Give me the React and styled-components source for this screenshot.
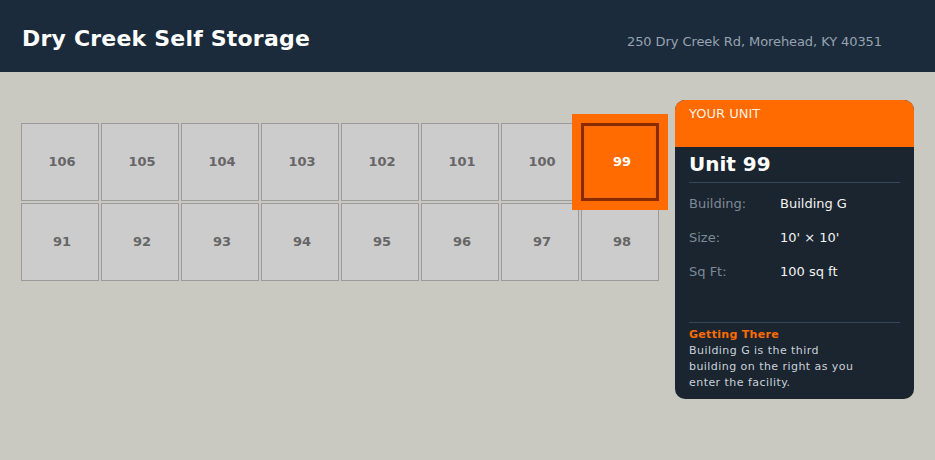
import React from "react";
import styled, { createGlobalStyle } from "styled-components";

const Global = createGlobalStyle`
  html, body { margin: 0; padding: 0; }
  body {
    background: #c9c9c1;
    font-family: "DejaVu Sans", Verdana, sans-serif;
    width: 935px;
    height: 460px;
    overflow: hidden;
  }
`;

const Header = styled.header`
  height: 72px;
  box-sizing: border-box;
  padding: 4px 53px 0 22px;
  background: #1b2b3c;
  display: flex;
  align-items: center;
  justify-content: space-between;
`;

const Title = styled.h1`
  margin: 0;
  font-size: 22px;
  font-weight: 700;
  letter-spacing: 0.2px;
  color: #ffffff;
`;

const Address = styled.div`
  margin-top: 7px;
  font-size: 13px;
  letter-spacing: -0.08px;
  color: #97a3af;
`;

const Main = styled.main`
  display: flex;
  align-items: flex-start;
  justify-content: space-between;
  padding: 28px 21px;
`;

const Grid = styled.div`
  margin-top: 23px;
  display: grid;
  grid-template-columns: repeat(8, 78px);
  grid-auto-rows: 78px;
  gap: 2px;
`;

const Cell = styled.div`
  position: relative;
  box-sizing: border-box;
  display: flex;
  align-items: center;
  justify-content: center;
  padding-left: 4px;
  padding-bottom: 2px;
  font-size: 13px;
  font-weight: 700;
  background: ${(p) => (p.$active ? "#ff6b00" : "#cccccc")};
  color: ${(p) => (p.$active ? "#ffffff" : "#666666")};
  border: ${(p) => (p.$active ? "3px solid #8a2a00" : "1px solid #9b9b9b")};
  box-shadow: ${(p) =>
    p.$active ? "inset 0 0 0 1px #ee6a18, 0 0 0 9px #ff6b00" : "none"};
  z-index: ${(p) => (p.$active ? 2 : 1)};
`;

const Panel = styled.aside`
  width: 239px;
  border-radius: 10px;
  overflow: hidden;
  background: #1b2530;
`;

const PanelHead = styled.div`
  height: 47px;
  box-sizing: border-box;
  padding: 6px 14px 0;
  background: #ff6b00;
  color: rgba(255, 255, 255, 0.92);
  font-size: 13px;
`;

const PanelBody = styled.div`
  padding: 5px 14px 8px;
`;

const UnitName = styled.h2`
  margin: 0;
  font-size: 20px;
  line-height: 24px;
  font-weight: 700;
  color: #ffffff;
  padding-bottom: 6px;
  border-bottom: 1px solid #364757;
`;

const Rows = styled.div`
  margin-top: 4px;
`;

const Row = styled.div`
  height: 34px;
  display: grid;
  grid-template-columns: 91px 1fr;
  align-items: center;
  font-size: 13px;
  line-height: 16px;
`;

const Label = styled.span`
  color: #7d8a97;
`;

const Value = styled.span`
  color: #f2f2f2;
`;

const Directions = styled.div`
  margin-top: 33px;
  padding-top: 4px;
  border-top: 1px solid #364757;
`;

const DirHead = styled.div`
  font-size: 11px;
  line-height: 16px;
  font-weight: 700;
  color: #ff6b00;
  letter-spacing: 0.3px;
`;

const DirText = styled.p`
  margin: 0;
  max-width: 172px;
  font-size: 11px;
  line-height: 16px;
  color: #c9d1d9;
  letter-spacing: 0.45px;
`;

const topRow = [106, 105, 104, 103, 102, 101, 100, 99];
const bottomRow = [91, 92, 93, 94, 95, 96, 97, 98];

export default function App() {
  const selected = 99;
  return (
    <>
      <Global />
      <Header>
        <Title>Dry Creek Self Storage</Title>
        <Address>250 Dry Creek Rd, Morehead, KY 40351</Address>
      </Header>
      <Main>
        <Grid>
          {[...topRow, ...bottomRow].map((n) => (
            <Cell key={n} $active={n === selected}>
              {n}
            </Cell>
          ))}
        </Grid>
        <Panel>
          <PanelHead>YOUR UNIT</PanelHead>
          <PanelBody>
            <UnitName>Unit 99</UnitName>
            <Rows>
              <Row>
                <Label>Building:</Label>
                <Value>Building G</Value>
              </Row>
              <Row>
                <Label>Size:</Label>
                <Value>10' × 10'</Value>
              </Row>
              <Row>
                <Label>Sq Ft:</Label>
                <Value>100 sq ft</Value>
              </Row>
            </Rows>
            <Directions>
              <DirHead>Getting There</DirHead>
              <DirText>
                Building G is the third building on the right as you enter the
                facility.
              </DirText>
            </Directions>
          </PanelBody>
        </Panel>
      </Main>
    </>
  );
}
